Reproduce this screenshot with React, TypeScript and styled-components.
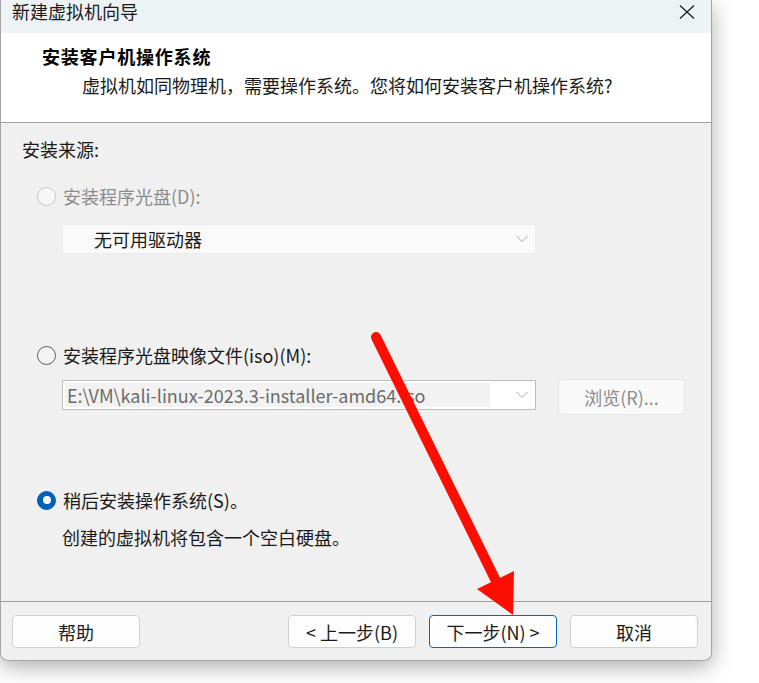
import React from "react";
import styled, { createGlobalStyle } from "styled-components";

const GlobalStyle = createGlobalStyle`
  html, body { margin: 0; padding: 0; background: #ffffff; }
  body {
    font-family: "Noto Sans CJK SC", "Noto Sans", sans-serif;
    font-size: 18px;
    color: #1a1a1a;
  }
  * { box-sizing: border-box; }
`;

const Page = styled.div`
  position: relative;
  width: 759px;
  height: 683px;
  overflow: hidden;
  background: #ffffff;
`;

const Window = styled.div`
  width: 712px;
  height: 661px;
  border: 1px solid #a5a5a5;
  border-top: none;
  border-radius: 0 0 8px 8px;
  background: #f0f0f0;
  display: flex;
  flex-direction: column;
  overflow: hidden;
  box-shadow: 0 6px 22px rgba(0, 0, 0, 0.32);
`;

const TitleBar = styled.div`
  height: 33px;
  background: #edf2f5;
  display: flex;
  align-items: flex-start;
  justify-content: space-between;
  padding: 1px 16px 0 11px;
`;

const TitleText = styled.div`
  font-size: 18px;
  line-height: 20px;
  color: #1a1a1a;
`;

const CloseIcon = styled.svg`
  margin-top: 3px;
  width: 16px;
  height: 16px;
`;

const Header = styled.div`
  height: 90px;
  background: #ffffff;
  border-bottom: 1px solid #a0a0a0;
  padding: 11px 0 0 41px;
`;

const Heading = styled.div`
  font-size: 18px;
  line-height: 24px;
  font-weight: 700;
  color: #000;
  letter-spacing: 0.8px;
`;

const SubHeading = styled.div`
  margin: 5px 0 0 40px;
  font-size: 18px;
  line-height: 24px;
  color: #1a1a1a;
`;

const Body = styled.div`
  flex: 1;
  padding: 14px 0 0 21px;
`;

const SectionLabel = styled.div`
  line-height: 24px;
  color: #1a1a1a;
`;

const Options = styled.div`
  padding-left: 15px;
  display: flex;
  flex-direction: column;
`;

const RadioRow = styled.div<{ $mt: number }>`
  margin-top: ${(p) => p.$mt}px;
  height: 24px;
  display: flex;
  align-items: center;
  gap: 7px;
`;

const RadioCircle = styled.span<{ $state: "disabled" | "off" | "on" }>`
  width: 19px;
  height: 19px;
  border-radius: 50%;
  flex: none;
  display: flex;
  align-items: center;
  justify-content: center;
  border: 1px solid
    ${(p) => (p.$state === "disabled" ? "#c6c6c6" : p.$state === "off" ? "#5c5c5c" : "#005fb8")};
  background: ${(p) => (p.$state === "on" ? "#005fb8" : p.$state === "disabled" ? "#f7f7f7" : "#f3f3f3")};
`;

const RadioDot = styled.span`
  width: 8px;
  height: 8px;
  border-radius: 50%;
  background: #ffffff;
`;

const RadioLabel = styled.span<{ $disabled?: boolean }>`
  line-height: 24px;
  color: ${(p) => (p.$disabled ? "#8c8c8c" : "#1a1a1a")};
`;

const ComboBox = styled.div<{ $disabled?: boolean; $mt: number }>`
  margin: ${(p) => p.$mt}px 0 0 25px;
  width: 474px;
  height: 30px;
  display: flex;
  align-items: center;
  border: 1px solid ${(p) => (p.$disabled ? "#ececec" : "#bdbdbd")};
  background: ${(p) => (p.$disabled ? "#fafafa" : "#ffffff")};
  padding: 2px 0 2px 2px;
`;

const ComboText = styled.div<{ $disabled?: boolean }>`
  flex: 1;
  height: 100%;
  display: flex;
  align-items: center;
  padding-left: ${(p) => (p.$disabled ? "29px" : "2px")};
  background: ${(p) => (p.$disabled ? "transparent" : "#f2f2f2")};
  color: ${(p) => (p.$disabled ? "#1a1a1a" : "#6b6b6b")};
  white-space: nowrap;
  overflow: hidden;
  margin-right: ${(p) => (p.$disabled ? "0" : "26px")};
`;

const Chevron = styled.svg`
  flex: none;
  width: 12px;
  height: 8px;
  margin-right: 7px;
`;

const FileRow = styled.div`
  margin-top: 12px;
  display: flex;
  align-items: flex-start;
`;

const BrowseButton = styled.div`
  margin-left: 22px;
  width: 127px;
  height: 36px;
  border: 1px solid #e6e6e6;
  border-radius: 4px;
  background: #f9f9f9;
  color: #8c8c8c;
  display: flex;
  align-items: center;
  justify-content: center;
`;

const Description = styled.div`
  margin: 13px 0 0 25px;
  line-height: 24px;
  color: #1a1a1a;
`;

const Footer = styled.div`
  height: 59px;
  border-top: 1px solid #a0a0a0;
  padding: 13px 13px 0 11px;
  display: flex;
  align-items: flex-start;
`;

const ButtonGroup = styled.div`
  margin-left: auto;
  display: flex;
  gap: 13px;
`;

const Button = styled.div<{ $primary?: boolean }>`
  width: 128px;
  height: 33px;
  border-radius: 4px;
  border: 1px solid ${(p) => (p.$primary ? "#0067c0" : "#d0d0d0")};
  background: #fdfdfd;
  color: #1a1a1a;
  display: flex;
  align-items: center;
  justify-content: center;
  line-height: 24px;
`;

const ArrowOverlay = styled.svg`
  position: absolute;
  left: 0;
  top: 0;
  width: 759px;
  height: 683px;
  pointer-events: none;
`;

const ChevronIcon = () => (
  <Chevron viewBox="0 0 12 8">
    <path d="M0.5 1 L6 6.5 L11.5 1" fill="none" stroke="#a8a8a8" strokeWidth="1" />
  </Chevron>
);

export default function App() {
  return (
    <Page>
      <GlobalStyle />
      <Window>
        <TitleBar>
          <TitleText>新建虚拟机向导</TitleText>
          <CloseIcon viewBox="0 0 16 16">
            <path d="M1 1.5 L15 14.5 M15 1.5 L1 14.5" stroke="#1a1a1a" strokeWidth="1.2" fill="none" />
          </CloseIcon>
        </TitleBar>
        <Header>
          <Heading>安装客户机操作系统</Heading>
          <SubHeading>虚拟机如同物理机，需要操作系统。您将如何安装客户机操作系统?</SubHeading>
        </Header>
        <Body>
          <SectionLabel>安装来源:</SectionLabel>
          <Options>
            <RadioRow $mt={23}>
              <RadioCircle $state="disabled" />
              <RadioLabel $disabled>安装程序光盘(D):</RadioLabel>
            </RadioRow>
            <ComboBox $disabled $mt={16}>
              <ComboText $disabled>无可用驱动器</ComboText>
              <ChevronIcon />
            </ComboBox>
            <RadioRow $mt={89}>
              <RadioCircle $state="off" />
              <RadioLabel>安装程序光盘映像文件(iso)(M):</RadioLabel>
            </RadioRow>
            <FileRow>
              <ComboBox $mt={1}>
                <ComboText>E:\VM\kali-linux-2023.3-installer-amd64.iso</ComboText>
                <ChevronIcon />
              </ComboBox>
              <BrowseButton>浏览(R)...</BrowseButton>
            </FileRow>
            <RadioRow $mt={73}>
              <RadioCircle $state="on">
                <RadioDot />
              </RadioCircle>
              <RadioLabel>稍后安装操作系统(S)。</RadioLabel>
            </RadioRow>
            <Description>创建的虚拟机将包含一个空白硬盘。</Description>
          </Options>
        </Body>
        <Footer>
          <Button>帮助</Button>
          <ButtonGroup>
            <Button>&lt; 上一步(B)</Button>
            <Button $primary>下一步(N) &gt;</Button>
            <Button>取消</Button>
          </ButtonGroup>
        </Footer>
      </Window>
      <ArrowOverlay viewBox="0 0 759 683">
        <line x1="376" y1="337" x2="497" y2="583" stroke="#fe0d00" strokeWidth="10" strokeLinecap="round" />
        <polygon points="513,615 514,571 477,589" fill="#fe0d00" />
      </ArrowOverlay>
    </Page>
  );
}
